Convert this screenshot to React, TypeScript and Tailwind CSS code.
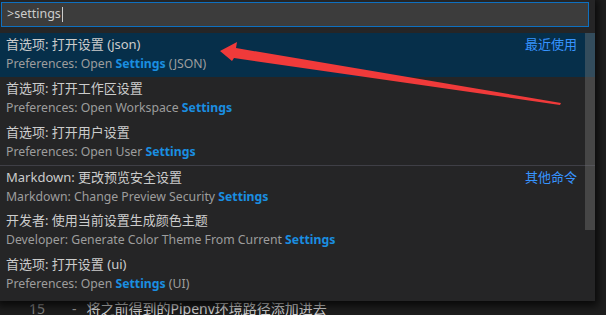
const font = { fontFamily: '"Noto Sans", "Noto Sans CJK SC", sans-serif' };

type Part = { t: string; hl?: boolean };
type Item = { label: string; detail: Part[]; tag?: string; sep?: boolean; active?: boolean };

const items: Item[] = [
  {
    label: '首选项: 打开设置 (json)',
    detail: [{ t: 'Preferences: Open ' }, { t: 'Settings', hl: true }, { t: ' (JSON)' }],
    tag: '最近使用',
    active: true,
  },
  {
    label: '首选项: 打开工作区设置',
    detail: [{ t: 'Preferences: Open Workspace ' }, { t: 'Settings', hl: true }],
  },
  {
    label: '首选项: 打开用户设置',
    detail: [{ t: 'Preferences: Open User ' }, { t: 'Settings', hl: true }],
  },
  {
    label: 'Markdown: 更改预览安全设置',
    detail: [{ t: 'Markdown: Change Preview Security ' }, { t: 'Settings', hl: true }],
    tag: '其他命令',
    sep: true,
  },
  {
    label: '开发者: 使用当前设置生成颜色主题',
    detail: [{ t: 'Developer: Generate Color Theme From Current ' }, { t: 'Settings', hl: true }],
  },
  {
    label: '首选项: 打开设置 (ui)',
    detail: [{ t: 'Preferences: Open ' }, { t: 'Settings', hl: true }, { t: ' (UI)' }],
  },
];

function Row({ item }: { item: Item }) {
  return (
    <div
      className={`h-[44px] pl-[6px] pr-[18px] pt-[1px] ${item.sep ? 'border-t border-[#3f3f46]' : ''} ${
        item.active ? 'bg-[#062f4a]' : ''
      }`}
    >
      <div className="flex justify-between leading-[20px] text-[13px] text-[#cccccc]">
        <span>{item.label}</span>
        {item.tag && <span className="text-[#3794ff]">{item.tag}</span>}
      </div>
      <div className="leading-[20px] text-[12.25px] text-[#9d9d9d]">
        {item.detail.map((p, i) => (
          <span key={i} className={p.hl ? 'font-bold text-[#1a8ee0]' : ''}>
            {p.t}
          </span>
        ))}
      </div>
    </div>
  );
}

export default function App() {
  return (
    <div className="relative w-[606px] h-[315px] overflow-hidden bg-[#1e1e1e]" style={font}>
      {/* editor behind the quick pick */}
      <div className="pt-[299px] flex h-[19px] leading-[19px] text-[14px] box-content">
        <span className="w-[45px] text-right text-[#858585]">15</span>
        <span className="ml-[27px] text-[#9a9a9a]">-</span>
        <span className="ml-[10px] text-[#d4d4d4]">将之前得到的Pipenv环境路径添加进去</span>
      </div>

      {/* quick pick */}
      <div className="absolute top-0 left-0 w-[595px] bg-[#252526] pt-[2px] pb-[4px] shadow-[0_2px_8px_3px_rgba(0,0,0,0.7)]">
        <div className="ml-[1px] w-[588px] h-[25px] bg-[#3c3c3c] border border-[#0e70c0] flex items-center pl-[5px] text-[12.5px] text-[#cccccc]">
          <span>&gt;settings</span>
          <span className="w-px h-[15px] bg-[#cccccc] ml-px" />
        </div>
        <div className="relative mt-[6px]">
          {items.map((it, i) => (
            <Row key={i} item={it} />
          ))}
          <div className="absolute top-0 right-0 w-[10px] h-[197px] bg-[rgba(121,121,121,0.4)]" />
        </div>
      </div>

      {/* annotation arrow */}
      <svg className="absolute top-0 left-0" width="606" height="315" viewBox="0 0 606 315">
        <polygon
          points="220,51 237,42 236,48 561,103 560,105 234,58 232,61"
          fill="#f03a3a"
        />
      </svg>
    </div>
  );
}
